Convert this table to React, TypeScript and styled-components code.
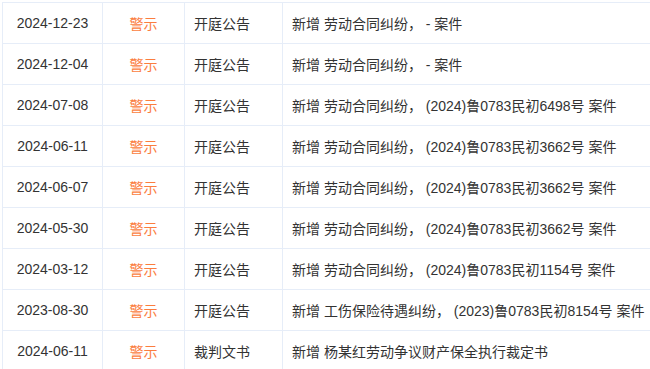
import { Fragment } from "react";
import styled, { createGlobalStyle } from "styled-components";

const GlobalStyle = createGlobalStyle`
  html, body {
    margin: 0;
    padding: 0;
    background: #fff;
    overflow: hidden;
  }
  body {
    font-family: "Liberation Sans", "Noto Sans CJK SC", Arial, sans-serif;
    color: #333;
  }
`;

const Wrapper = styled.div`
  padding: 2px 0 0 2px;
  width: 720px;
`;

const Table = styled.div`
  display: grid;
  grid-template-columns: 100px 82px 98px 1fr;
  border-top: 1px solid #e6edf8;
  border-left: 1px solid #e6edf8;
`;

const Cell = styled.div<{ $align?: "center" | "left" }>`
  height: 40px;
  display: flex;
  align-items: center;
  justify-content: ${(p) => (p.$align === "center" ? "center" : "flex-start")};
  padding: 0 ${(p) => (p.$align === "center" ? "0" : "9px")};
  border-right: 1px solid #e6edf8;
  border-bottom: 1px solid #e6edf8;
  font-size: 14px;
  white-space: nowrap;
  color: #333;
`;

const Tag = styled.span`
  color: #fb7d3e;
`;

interface Row {
  date: string;
  type: string;
  content: string;
}

const rows: Row[] = [
  { date: "2024-12-23", type: "开庭公告", content: "新增 劳动合同纠纷， - 案件" },
  { date: "2024-12-04", type: "开庭公告", content: "新增 劳动合同纠纷， - 案件" },
  { date: "2024-07-08", type: "开庭公告", content: "新增 劳动合同纠纷， (2024)鲁0783民初6498号 案件" },
  { date: "2024-06-11", type: "开庭公告", content: "新增 劳动合同纠纷， (2024)鲁0783民初3662号 案件" },
  { date: "2024-06-07", type: "开庭公告", content: "新增 劳动合同纠纷， (2024)鲁0783民初3662号 案件" },
  { date: "2024-05-30", type: "开庭公告", content: "新增 劳动合同纠纷， (2024)鲁0783民初3662号 案件" },
  { date: "2024-03-12", type: "开庭公告", content: "新增 劳动合同纠纷， (2024)鲁0783民初1154号 案件" },
  { date: "2023-08-30", type: "开庭公告", content: "新增 工伤保险待遇纠纷， (2023)鲁0783民初8154号 案件" },
  { date: "2024-06-11", type: "裁判文书", content: "新增 杨某红劳动争议财产保全执行裁定书" },
];

export default function App() {
  return (
    <>
      <GlobalStyle />
      <Wrapper>
        <Table>
          {rows.map((row, index) => (
            <Fragment key={index}>
              <Cell $align="center">{row.date}</Cell>
              <Cell $align="center">
                <Tag>警示</Tag>
              </Cell>
              <Cell>{row.type}</Cell>
              <Cell>{row.content}</Cell>
            </Fragment>
          ))}
        </Table>
      </Wrapper>
    </>
  );
}
